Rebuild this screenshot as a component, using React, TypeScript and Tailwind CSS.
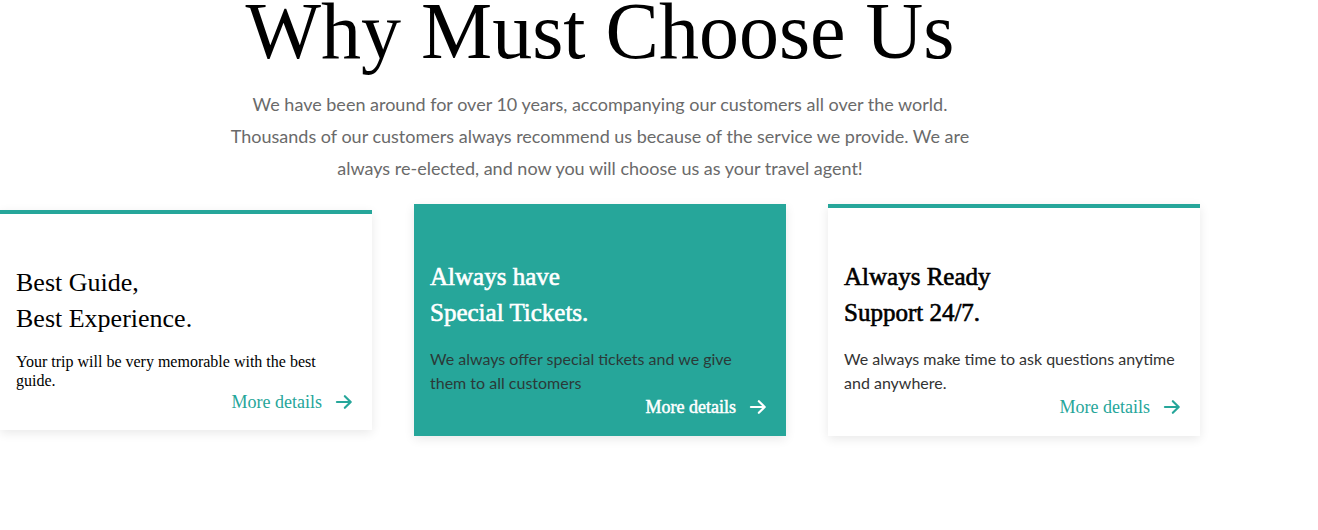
import React from "react";

const serif = { fontFamily: '"Liberation Serif", "Times New Roman", serif' };
const sans = { fontFamily: 'Lato, "Noto Sans", sans-serif' };

function Arrow({ className }: { className: string }) {
  return (
    <svg viewBox="0 0 24 24" width="20" height="20" fill="none" stroke="currentColor" strokeWidth="2.6" strokeLinecap="round" strokeLinejoin="round" className={className}>
      <path d="M3.5 12h16" />
      <path d="M13 5 20 12 13 19" />
    </svg>
  );
}

function MoreDetails({ light }: { light?: boolean }) {
  return (
    <div className="flex items-center justify-end gap-[12px] pr-[2px] h-[24px]">
      <span
        className={`text-[18px] leading-[24px] ${light ? "text-white [-webkit-text-stroke:0.5px_#ffffff]" : "text-[#26a69a]"}`}
        style={serif}
      >
        More details
      </span>
      <Arrow className={light ? "text-white" : "text-[#26a69a]"} />
    </div>
  );
}

export default function App() {
  return (
    <div className="w-[1318px] h-[530px] bg-white overflow-hidden">
      <div className="w-[1200px] flex flex-col items-center">
        <h1 className="text-[80px] leading-[62px] text-black whitespace-nowrap" style={serif}>
          Why Must Choose Us
        </h1>
        <p className="mt-[26px] text-[18px] leading-[32px] text-[#6a6a6a] text-center whitespace-nowrap" style={sans}>
          We have been around for over 10 years, accompanying our customers all over the world.
          <br />
          Thousands of our customers always recommend us because of the service we provide. We are
          <br />
          always re-elected, and now you will choose us as your travel agent!
        </p>
        <div className="mt-[20px] w-full grid grid-cols-3 gap-[42px] items-center">
          {/* Card 1 */}
          <div className="bg-white border-t-4 border-[#26a69a] shadow-[0_3px_10px_rgba(0,0,0,0.09)] px-4 pt-[51px] pb-[16px]">
            <h3 className="text-[26px] leading-[36px] text-black" style={serif}>
              Best Guide,
              <br />
              Best Experience.
            </h3>
            <p className="mt-[15px] text-[16px] leading-[19px] text-black pr-4" style={serif}>
              Your trip will be very memorable with the best guide.
            </p>
            <MoreDetails />
          </div>
          {/* Card 2 */}
          <div className="bg-[#26a69a] border-t-4 border-[#26a69a] shadow-[0_3px_10px_rgba(0,0,0,0.09)] px-4 pt-[51px] pb-[17px]">
            <h3 className="text-[25px] leading-[36px] text-white [-webkit-text-stroke:0.6px_#ffffff]" style={serif}>
              Always have
              <br />
              Special Tickets.
            </h3>
            <p className="mt-[16px] text-[16px] leading-[24px] text-[#2b3a38]" style={sans}>
              We always offer special tickets and we give
              <br />
              them to all customers
            </p>
            <MoreDetails light />
          </div>
          {/* Card 3 */}
          <div className="bg-white border-t-4 border-[#26a69a] shadow-[0_3px_10px_rgba(0,0,0,0.09)] px-4 pt-[51px] pb-[17px]">
            <h3 className="text-[25px] leading-[36px] text-black [-webkit-text-stroke:0.6px_#000000]" style={serif}>
              Always Ready
              <br />
              Support 24/7.
            </h3>
            <p className="mt-[16px] text-[16px] leading-[24px] text-[#333]" style={sans}>
              We always make time to ask questions anytime
              <br />
              and anywhere.
            </p>
            <MoreDetails />
          </div>
        </div>
      </div>
    </div>
  );
}
